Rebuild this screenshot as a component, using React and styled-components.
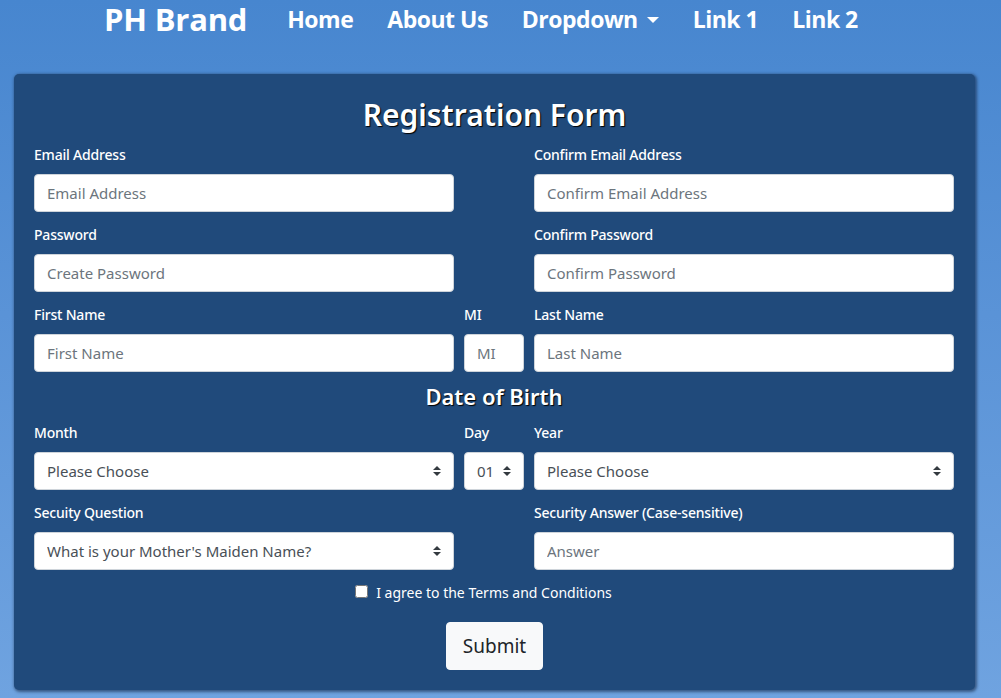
import React from 'react'
import styled, { createGlobalStyle } from 'styled-components';

const GlobalStyle = createGlobalStyle`
  html, body {
    margin: 0;
    padding: 0;
  }
  body {
    font-family: "Noto Sans", "Open Sans", sans-serif;
    background: linear-gradient(to bottom, #4786cf 0%, #5a93d7 45%, #6fa3e0 100%);
    min-height: 698px;
  }
`;

const arrows = "url(\"data:image/svg+xml;utf8,<svg xmlns='http://www.w3.org/2000/svg' width='8' height='10' viewBox='0 0 8 10'><path d='M4 0 L8 4 H0 Z M4 10 L0 6 H8 Z' fill='%23343a40'/></svg>\")";

function App() {
    return (
        <>
            <GlobalStyle />
            <StyledNav>
                <span className='brand'>PH Brand</span>
                <a>Home</a>
                <a>About Us</a>
                <a className='dropdown'>Dropdown</a>
                <a>Link 1</a>
                <a>Link 2</a>
            </StyledNav>
            <StyledCard>
                <Title>Registration Form</Title>
                <Grid>
                    <Field $span="1 / 3">
                        <Label>Email Address</Label>
                        <Input placeholder='Email Address' />
                    </Field>
                    <Field $span="3 / 4">
                        <Label>Confirm Email Address</Label>
                        <Input placeholder='Confirm Email Address' />
                    </Field>
                    <Field $span="1 / 3">
                        <Label>Password</Label>
                        <Input placeholder='Create Password' />
                    </Field>
                    <Field $span="3 / 4">
                        <Label>Confirm Password</Label>
                        <Input placeholder='Confirm Password' />
                    </Field>
                    <Field $span="1 / 2">
                        <Label>First Name</Label>
                        <Input placeholder='First Name' />
                    </Field>
                    <Field $span="2 / 3">
                        <Label>MI</Label>
                        <Input placeholder='MI' />
                    </Field>
                    <Field $span="3 / 4">
                        <Label>Last Name</Label>
                        <Input placeholder='Last Name' />
                    </Field>
                    <SubTitle>Date of Birth</SubTitle>
                    <Field $span="1 / 2">
                        <Label>Month</Label>
                        <Select defaultValue=''><option value=''>Please Choose</option></Select>
                    </Field>
                    <Field $span="2 / 3">
                        <Label>Day</Label>
                        <Select $small defaultValue='01'><option>01</option></Select>
                    </Field>
                    <Field $span="3 / 4">
                        <Label>Year</Label>
                        <Select defaultValue=''><option value=''>Please Choose</option></Select>
                    </Field>
                    <Field $span="1 / 3">
                        <Label>Secuity Question</Label>
                        <Select defaultValue='m'><option value='m'>What is your Mother's Maiden Name?</option></Select>
                    </Field>
                    <Field $span="3 / 4">
                        <Label>Security Answer (Case-sensitive)</Label>
                        <Input placeholder='Answer' />
                    </Field>
                </Grid>
                <Agree>
                    <input type='checkbox' />
                    <span>I agree to the Terms and Conditions</span>
                </Agree>
                <SubmitRow>
                    <button>Submit</button>
                </SubmitRow>
            </StyledCard>
        </>
    )
}

const StyledNav = styled.nav`
  display: flex;
  align-items: center;
  height: 38px;
  padding-left: 104px;
  gap: 34px;
  font-family: "Open Sans", "Noto Sans", sans-serif;
  color: white;
  line-height: 38px;
  .brand {
    font-size: 31px;
    font-weight: 700;
    margin-right: 6px;
    letter-spacing: -0.2px;
  }
  a {
    font-size: 23px;
    font-weight: 700;
    letter-spacing: -0.5px;
  }
  .dropdown::after {
    content: "";
    display: inline-block;
    margin-left: 9px;
    vertical-align: 5px;
    border-top: 6px solid white;
    border-left: 6px solid transparent;
    border-right: 6px solid transparent;
  }
`;

const StyledCard = styled.form`
  margin: 36px 26px 0 14px;
  background: #204a7b;
  border-radius: 5px;
  box-shadow: 1px 1px 3px 1px rgba(20, 40, 70, 0.6);
  padding: 21px 20px 20px;
  color: white;
`;

const Title = styled.h1`
  margin: 0 0 10px;
  text-align: center;
  font-size: 30px;
  font-weight: 600;
  line-height: 40px;
  text-shadow: 1px 1px 1px #000;
`;

const SubTitle = styled.h2`
  grid-column: 1 / 4;
  margin: -4px 0 0;
  text-align: center;
  font-size: 22px;
  font-weight: 600;
  line-height: 30px;
  height: 42px;
  text-shadow: 1px 1px 1px #000;
`;

const Grid = styled.div`
  display: grid;
  grid-template-columns: 420px 60px 420px;
  column-gap: 10px;
`;

const Field = styled.div`
  grid-column: ${p => p.$span};
  display: flex;
  flex-direction: column;
  gap: 9px;
  padding-bottom: 13px;
  width: ${p => p.$span === '1 / 3' ? '420px' : 'auto'};
`;

const Label = styled.label`
  font-size: 14px;
  font-weight: 500;
  line-height: 20px;
  height: 20px;
  white-space: nowrap;
  letter-spacing: -0.2px;
`;

const Input = styled.input`
  box-sizing: border-box;
  height: 38px;
  width: 100%;
  padding: 0 12px;
  border: 1px solid #ced4da;
  border-radius: 4px;
  font-family: "Noto Sans", sans-serif;
  font-size: 15px;
  color: #495057;
  outline: none;
  &::placeholder {
    color: #6c757d;
  }
`;

const Select = styled.select`
  box-sizing: border-box;
  height: 38px;
  width: 100%;
  padding: 0 ${p => p.$small ? '20px' : '28px'} 0 12px;
  border: 1px solid #ced4da;
  border-radius: 4px;
  font-family: "Noto Sans", sans-serif;
  font-size: 15px;
  color: #495057;
  background: white ${arrows} no-repeat right 12px center / 8px 10px;
  appearance: none;
  outline: none;
`;

const Agree = styled.label`
  display: flex;
  justify-content: center;
  align-items: center;
  gap: 8px;
  padding-right: 22px;
  font-size: 14px;
  input {
    margin: 0 0 2px;
    width: 13px;
    height: 13px;
  }
`;

const SubmitRow = styled.div`
  display: flex;
  justify-content: center;
  padding-top: 20px;
  button {
    height: 48px;
    padding: 0 16px;
    background: #f8f9fa;
    border: 1px solid #f8f9fa;
    border-radius: 4px;
    font-family: "Noto Sans", sans-serif;
    font-size: 19px;
    color: #212529;
  }
`;

export default App;
